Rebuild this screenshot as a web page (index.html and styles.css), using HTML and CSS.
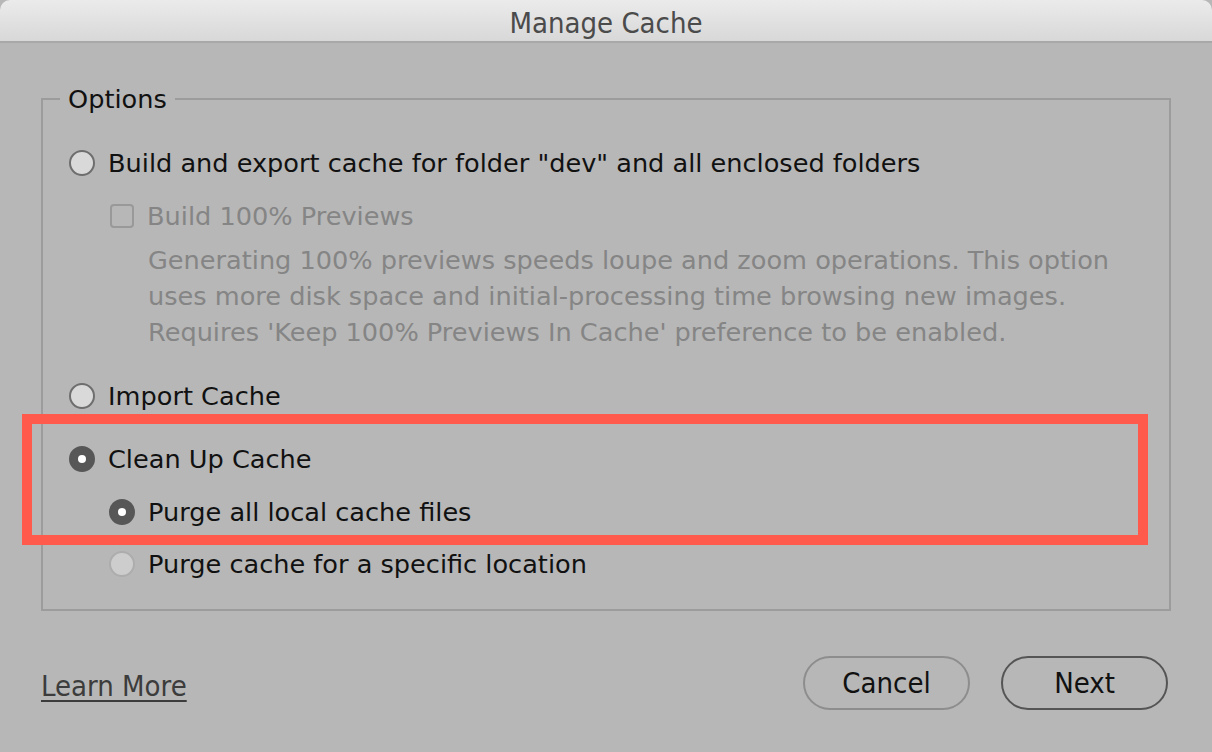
FILE: index.html
```html
<!DOCTYPE html>
<html>
<head>
<meta charset="utf-8">
<link rel="stylesheet" href="styles.css">
</head>
<body>
<div class="window">
  <div class="titlebar">Manage Cache</div>
  <div class="body">
    <fieldset class="group">
      <legend>Options</legend>
      <div class="row r1"><span class="radio"></span><span class="label">Build and export cache for folder "dev" and all enclosed folders</span></div>
      <div class="row sub r2 disabled"><span class="check"></span><span class="label">Build 100% Previews</span></div>
      <div class="desc disabled">
        <div>Generating 100% previews speeds loupe and zoom operations. This option</div>
        <div>uses more disk space and initial-processing time browsing new images.</div>
        <div>Requires 'Keep 100% Previews In Cache' preference to be enabled.</div>
      </div>
      <div class="row r3"><span class="radio"></span><span class="label">Import Cache</span></div>
      <div class="row r4"><span class="radio on"></span><span class="label">Clean Up Cache</span></div>
      <div class="row sub r5"><span class="radio on"></span><span class="label">Purge all local cache files</span></div>
      <div class="row sub r6"><span class="radio off"></span><span class="label">Purge cache for a specific location</span></div>
    </fieldset>
    <div class="footer">
      <a class="learn">Learn More</a>
      <div class="buttons">
        <button class="btn">Cancel</button>
        <button class="btn default">Next</button>
      </div>
    </div>
  </div>
  <div class="highlight"></div>
</div>
</body>
</html>
```
FILE: styles.css
```css
* { box-sizing: border-box; }
html, body { margin: 0; padding: 0; background: #b7b7b7; }
.window {
  position: relative;
  width: 1212px;
  height: 752px;
  background: #b7b7b7;
  border-radius: 10px;
  overflow: hidden;
  font-family: "DejaVu Sans", "Open Sans", sans-serif;
  color: #111;
}
.titlebar {
  height: 43px;
  background: linear-gradient(#ebebeb, #d8d8d8);
  border-bottom: 2px solid #a8a8a8;
  text-align: center;
  font-family: "DejaVu Sans Condensed", "Liberation Sans", sans-serif;
  font-size: 29px;
  line-height: 46px;
  color: #4b4b4b;
}
.body { padding: 38px 41px 0 41px; }
.group {
  margin: 0;
  padding: 0;
  width: 1130px;
  height: 530px;
  border: 2px solid #9c9c9c;
}
.group legend {
  margin-left: 17px;
  padding: 0 8px;
  font-size: 25.6px;
  line-height: 36px;
  color: #111;
}
.row {
  display: flex;
  align-items: center;
  height: 36px;
  font-size: 25.6px;
  padding-left: 26px;
}
.r1 { margin-top: 28px; }
.r2 { margin-top: 17px; }
.r3 { margin-top: 28px; }
.r4 { margin-top: 27px; }
.r5 { margin-top: 17px; }
.r6 { margin-top: 16px; }
.row.sub { padding-left: 66px; }
.radio {
  width: 26px; height: 26px;
  border-radius: 50%;
  border: 2px solid #6e6e6e;
  background: #d9d9d9;
  margin-right: 13px;
  flex: none;
  display: flex; align-items: center; justify-content: center;
}
.radio.on { background: #575757; border-color: #575757; }
.radio.on::after { content: ""; width: 8px; height: 8px; border-radius: 50%; background: #fff; }
.radio.off { background: #cdcdcd; border-color: #adadad; }
.check {
  width: 24px; height: 24px;
  border: 2px solid #999;
  border-radius: 4px;
  margin: 0 13px 0 1px;
  flex: none;
}
.disabled { color: #858585; }
.desc {
  padding-left: 105px;
  margin-top: 8px;
  font-size: 25.6px;
  line-height: 36px;
}
.footer {
  display: flex;
  align-items: center;
  justify-content: space-between;
  margin-top: 45px;
  height: 54px;
  padding-right: 3px;
}
.learn {
  font-family: "DejaVu Sans Condensed", "Liberation Sans", sans-serif;
  font-size: 29px;
  color: #3c3c3c;
  text-decoration: underline;
  text-underline-offset: 4px;
  margin-top: 6px;
}
.buttons { display: flex; gap: 31px; }
.btn {
  width: 167px; height: 54px;
  border-radius: 27px;
  border: 2px solid #8d8d8d;
  background: transparent;
  font-family: "DejaVu Sans Condensed", "Liberation Sans", sans-serif;
  font-size: 29px;
  color: #111;
  padding: 0;
}
.btn.default { border-color: #555; }
.highlight {
  position: absolute;
  left: 22px; top: 414px;
  width: 1126px; height: 131px;
  border: 10px solid #ff5a4c;
}
```
